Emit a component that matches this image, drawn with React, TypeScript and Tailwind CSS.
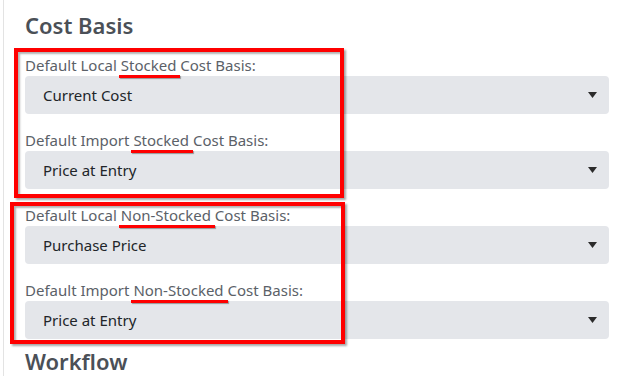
import React from "react";

type Field = {
  label: [string, string, string];
  value: string;
};

const groups: { box: string; fields: Field[] }[] = [
  {
    box: "left-[-11px] top-[-6px] w-[330px] h-[150px]",
    fields: [
      { label: ["Default Local ", "Stocked", " Cost Basis:"], value: "Current Cost" },
      { label: ["Default Import ", "Stocked", " Cost Basis:"], value: "Price at Entry" },
    ],
  },
  {
    box: "left-[-15px] top-[-2px] w-[335px] h-[142px]",
    fields: [
      { label: ["Default Local ", "Non-Stocked", " Cost Basis:"], value: "Purchase Price" },
      { label: ["Default Import ", "Non-Stocked", " Cost Basis:"], value: "Price at Entry" },
    ],
  },
];

const SelectBox: React.FC<{ value: string }> = ({ value }) => (
  <div className="flex items-center justify-between h-[38px] rounded-[4px] bg-[#e4e6ea] pl-[18px] pr-[12px] text-[15px] text-[#212529]">
    <span>{value}</span>
    <svg width="9" height="6" viewBox="0 0 9 6" className="fill-[#2b2b2b]">
      <path d="M0 0h9L4.5 6z" />
    </svg>
  </div>
);

const FieldRow: React.FC<{ field: Field }> = ({ field }) => (
  <div className="flex flex-col">
    <div className="h-[22px] text-[15px] leading-[22px] text-[#5b6168]">
      {field.label[0]}
      <span className="relative">
        {field.label[1]}
        {/* red marker stroke under the keyword */}
        <span className="absolute left-[-2px] right-[-4px] bottom-[-3px] h-[3px] bg-[#ff0000] shadow-[1px_1px_1px_rgba(0,0,0,0.35)]" />
      </span>
      {field.label[2]}
    </div>
    <SelectBox value={field.value} />
  </div>
);

export default function App() {
  return (
    <div className="w-[626px] h-[376px] overflow-hidden bg-white font-['Noto_Sans',sans-serif]">
      <div className="h-full ml-[3px] border-l border-[#e3e3e3] pl-[21px] pr-[17px]">
        <h2 className="pt-[10px] pb-[14px] text-[22px] leading-[30px] font-semibold text-[#4b5057]">Cost Basis</h2>
        <div className="flex flex-col gap-[15px]">
          {groups.map((g, gi) => (
            <div key={gi} className="relative flex flex-col gap-[15px]">
              {g.fields.map((f, i) => (
                <FieldRow key={i} field={f} />
              ))}
              {/* annotation frame drawn over the group */}
              <div
                className={`absolute ${g.box} border-[4px] border-[#ff0000] shadow-[2px_2px_2px_rgba(0,0,0,0.35),inset_2px_2px_2px_rgba(0,0,0,0.3)]`}
              />
            </div>
          ))}
        </div>
        <h2 className="mt-[7px] text-[22px] leading-[30px] font-semibold text-[#4b5057]">Workflow</h2>
      </div>
    </div>
  );
}
